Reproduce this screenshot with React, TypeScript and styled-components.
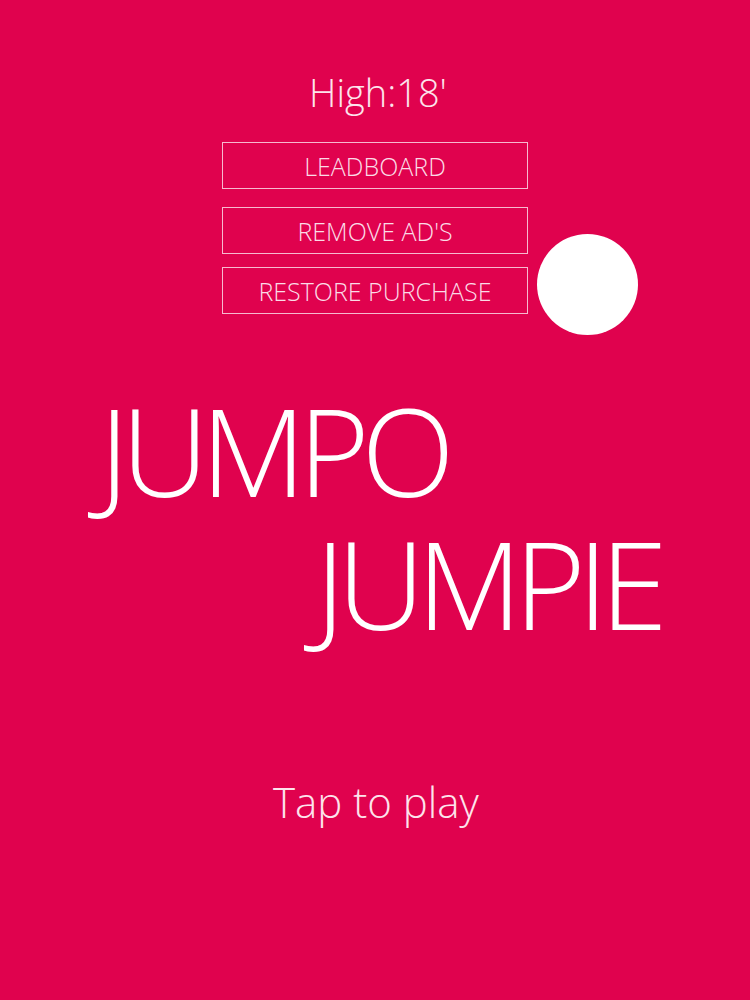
import React from "react";
import styled, { createGlobalStyle } from "styled-components";

const BG = "#E0024E";

const GlobalStyle = createGlobalStyle`
    html, body {
        margin: 0;
        padding: 0;
        background: ${BG};
    }
    body {
        font-family: "Open Sans", "Noto Sans", sans-serif;
        font-weight: 300;
        color: #ffffff;
    }
`;

const Screen = styled.div`
    position: relative;
    width: 750px;
    height: 1000px;
    background: ${BG};
    overflow: hidden;
    display: flex;
    flex-direction: column;
`;

const Score = styled.div`
    margin-top: 70px;
    align-self: center;
    padding-left: 6px;
    font-size: 38px;
    line-height: 44px;
    color: #fde4ec;
`;

const Menu = styled.div`
    margin-top: 28px;
    align-self: center;
    display: flex;
    flex-direction: column;
    width: 306px;
`;

const MenuButton = styled.div<{ $gap: number }>`
    box-sizing: border-box;
    height: 47px;
    margin-top: ${(p) => p.$gap}px;
    border: 1.5px solid #f7b9cf;
    display: flex;
    align-items: center;
    justify-content: center;
    font-size: 25px;
    color: #fbdbe6;
    cursor: pointer;
`;

const Ball = styled.div`
    position: absolute;
    left: 537px;
    top: 234px;
    width: 101px;
    height: 101px;
    border-radius: 50%;
    background: #ffffff;
`;

const Title = styled.div`
    margin-top: 70px;
    display: flex;
    flex-direction: column;
    font-size: 122px;
    line-height: 133px;
    letter-spacing: -8px;
    color: #ffffff;
`;

const TitleLine = styled.div<{ $indent: number }>`
    padding-left: ${(p) => p.$indent}px;
    white-space: nowrap;
`;

const TapToPlay = styled.div`
    margin-top: 127px;
    align-self: center;
    padding-left: 2px;
    font-size: 42px;
    line-height: 50px;
    color: #fde4ec;
`;

const buttons = [
    { label: "LEADBOARD", gap: 0 },
    { label: "REMOVE AD'S", gap: 18 },
    { label: "RESTORE PURCHASE", gap: 13 },
];

const App = () => {
    return (
        <>
            <GlobalStyle />
            <Screen>
                <Score>High:18'</Score>
                <Menu>
                    {buttons.map((b) => (
                        <MenuButton key={b.label} $gap={b.gap}>
                            {b.label}
                        </MenuButton>
                    ))}
                </Menu>
                <Ball />
                <Title>
                    <TitleLine $indent={99}>JUMPO</TitleLine>
                    <TitleLine $indent={315}>JUMPIE</TitleLine>
                </Title>
                <TapToPlay>Tap to play</TapToPlay>
            </Screen>
        </>
    );
};

export default App;
